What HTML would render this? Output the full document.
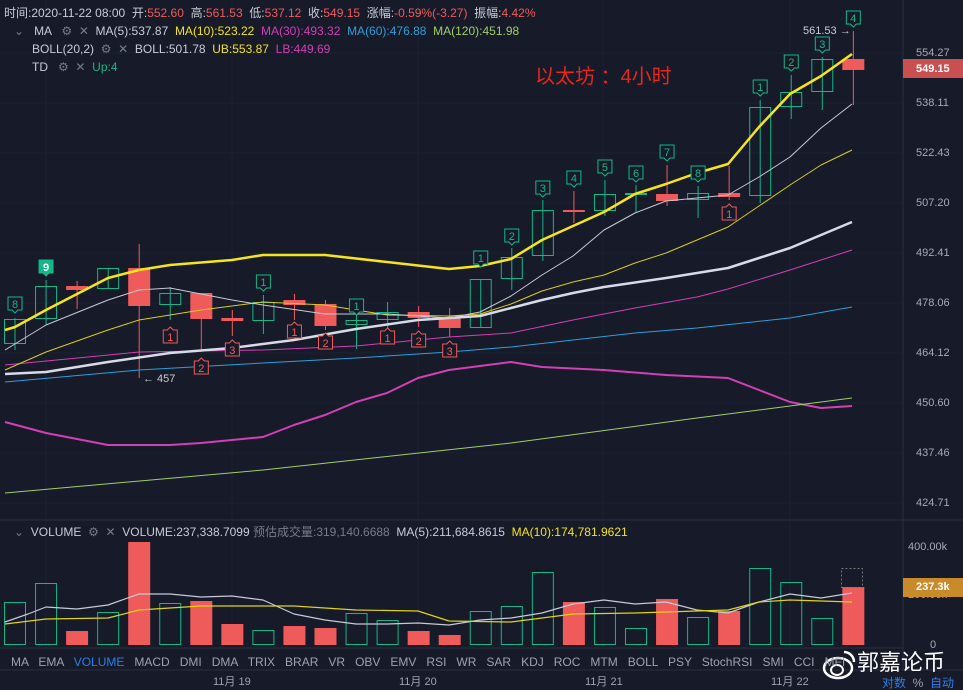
<!DOCTYPE html>
<html><head><meta charset="utf-8">
<style>
html,body{margin:0;padding:0;background:#161a29;width:963px;height:690px;overflow:hidden;font-family:"Liberation Sans","Noto Sans CJK SC",sans-serif;}
svg{position:absolute;left:0;top:0}
.t{position:absolute;font-size:12px;color:#c9ccd6;white-space:nowrap;line-height:14px}
.r{color:#ef5b5b}.y{color:#f2e21c}.m{color:#d33fb4}.b{color:#2e9fd8}.g{color:#9fcf6a}.gr{color:#13b886}.dim{color:#777c8c}
.ax{position:absolute;left:916px;font-size:11px;color:#a7abb6}
</style></head><body>
<svg id="s" width="963" height="690" xmlns="http://www.w3.org/2000/svg"></svg>

<div class="t" style="left:4px;top:6px">时间:2020-11-22 08:00 &nbsp;开:<span class="r">552.60</span> &nbsp;高:<span class="r">561.53</span> &nbsp;低:<span class="r">537.12</span> &nbsp;收:<span class="r">549.15</span> &nbsp;涨幅:<span class="r">-0.59%(-3.27)</span> &nbsp;振幅:<span class="r">4.42%</span></div>
<div class="t" style="left:14px;top:24px"><span class="dim">⌄</span>&nbsp;&nbsp; MA &nbsp;&nbsp;<span class="dim">⚙ &nbsp;✕</span> &nbsp;MA(5):537.87 &nbsp;<span class="y">MA(10):523.22</span> &nbsp;<span class="m">MA(30):493.32</span> &nbsp;<span class="b">MA(60):476.88</span> &nbsp;<span class="g">MA(120):451.98</span></div>
<div class="t" style="left:32px;top:42px">BOLL(20,2) &nbsp;<span class="dim">⚙ &nbsp;✕</span> &nbsp;BOLL:501.78 &nbsp;<span class="y">UB:553.87</span> &nbsp;<span class="m">LB:449.69</span></div>
<div class="t" style="left:32px;top:60px">TD &nbsp;&nbsp;<span class="dim">⚙ &nbsp;✕</span> &nbsp;<span class="gr">Up:4</span></div>
<div class="t" style="left:535px;top:65px;font-size:20px;line-height:24px;color:#e8261e">以太坊 ：4小时</div>

<div class="ax" style="top:47px">554.27</div>
<div style="position:absolute;left:903px;top:59px;width:60px;height:19px;background:#c94f50"></div>
<div class="ax" style="top:63px;color:#fff;font-weight:bold">549.15</div>
<div class="ax" style="top:97px">538.11</div>
<div class="ax" style="top:147px">522.43</div>
<div class="ax" style="top:197px">507.20</div>
<div class="ax" style="top:247px">492.41</div>
<div class="ax" style="top:297px">478.06</div>
<div class="ax" style="top:347px">464.12</div>
<div class="ax" style="top:397px">450.60</div>
<div class="ax" style="top:447px">437.46</div>
<div class="ax" style="top:497px">424.71</div>
<div class="t" style="left:803px;top:24px;font-size:11px">561.53 →</div>
<div class="t" style="left:143px;top:372px;font-size:11px">← 457</div>

<div class="t" style="left:14px;top:525px"><span class="dim">⌄</span>&nbsp; VOLUME &nbsp;<span class="dim">⚙ &nbsp;✕</span>&nbsp; VOLUME:237,338.7099 <span class="dim">预估成交量:319,140.6688</span> &nbsp;MA(5):211,684.8615 &nbsp;<span class="y">MA(10):174,781.9621</span></div>
<div class="ax" style="top:541px;left:908px">400.00k</div>
<div class="ax" style="top:589px;left:908px">200.00k</div>
<div style="position:absolute;left:903px;top:578px;width:60px;height:19px;background:#c98a2a"></div>
<div class="ax" style="top:581px;color:#fff;font-weight:bold">237.3k</div>
<div class="ax" style="top:639px;left:930px">0</div>

<div class="t" style="left:11px;top:655px;color:#9ea3b0;word-spacing:0">MA &nbsp;&nbsp;EMA &nbsp;&nbsp;<span class="b" style="color:#2d7ee8">VOLUME</span> &nbsp;&nbsp;MACD &nbsp;&nbsp;DMI &nbsp;&nbsp;DMA &nbsp;&nbsp;TRIX &nbsp;&nbsp;BRAR &nbsp;&nbsp;VR &nbsp;&nbsp;OBV &nbsp;&nbsp;EMV &nbsp;&nbsp;RSI &nbsp;&nbsp;WR &nbsp;&nbsp;SAR &nbsp;&nbsp;KDJ &nbsp;&nbsp;ROC &nbsp;&nbsp;MTM &nbsp;&nbsp;BOLL &nbsp;&nbsp;PSY &nbsp;&nbsp;StochRSI &nbsp;&nbsp;SMI &nbsp;&nbsp;CCI &nbsp;&nbsp;MFI</div>
<div class="t" style="left:213px;top:675px;font-size:11px;color:#9ea3b0">11月 19</div>
<div class="t" style="left:399px;top:675px;font-size:11px;color:#9ea3b0">11月 20</div>
<div class="t" style="left:585px;top:675px;font-size:11px;color:#9ea3b0">11月 21</div>
<div class="t" style="left:771px;top:675px;font-size:11px;color:#9ea3b0">11月 22</div>
<div class="t" style="left:882px;top:676px;font-size:12px;color:#2d7ee8">对数 &nbsp;<span style="color:#9ea3b0">%</span> &nbsp;自动</div>
<div class="t" style="left:857px;top:650px;font-size:22px;line-height:26px;color:#fff">郭嘉论币</div>

<script>
var s=document.getElementById('s'),h='';
function L(p,c,w){h+='<polyline fill="none" stroke="'+c+'" stroke-width="'+w+'" stroke-linejoin="round" points="'+p+'"/>';}
[53,103,153,203,253,303,353,403,453,503].forEach(function(y){h+='<line x1="0" x2="903" y1="'+y+'" y2="'+y+'" stroke="#1c2132"/>';});
[46,232,418,603,790].forEach(function(x){h+='<line x1="'+x+'" x2="'+x+'" y1="0" y2="648" stroke="#1c2132"/>';});
h+='<line x1="903" x2="903" y1="0" y2="670" stroke="#2a3042"/>';
h+='<line x1="0" x2="963" y1="520" y2="520" stroke="#2a3042"/>';
h+='<line x1="0" x2="903" y1="648" y2="648" stroke="#2a3042"/>';
h+='<line x1="0" x2="963" y1="670" y2="670" stroke="#2a3042"/>';
var G='#13b886',R='#ef5b5b';
var C=[[1,319,344,318,350],[1,286,319,280,325],[0,286,290,281,309],[1,268,289,268,289],[0,268,306,244,378],[1,293,305,287,320],[0,293,319,293,352],[0,318,321,310,336],[1,302,321,295,334],[0,300,305,294,320],[0,304,326,300,330],[1,320,325,312,349],[1,312,320,302,330],[0,312,318,306,327],[0,317,328,308,337],[1,279,328,279,328],[1,257,279,248,290],[1,210,256,200,261],[0,210,212,191,223],[1,194,211,180,216],[1,193,195,185,213],[0,194,201,165,206],[1,193,200,186,218],[0,193,197,166,200],[1,107,196,100,203],[1,92,107,75,119],[1,59,92,57,110],[0,59,70,31,105]];
var V=[602,583,631,612,542,603,601,624,630,626,628,613,620,631,635,611,606,572,602,607,628,599,617,611,568,582,618,587];
C.forEach(function(c,i){var x=15+i*31.05,col=c[0]?G:R;
 h+='<line x1="'+x+'" x2="'+x+'" y1="'+c[3]+'" y2="'+c[4]+'" stroke="'+col+'"/>';
 var bh=Math.max(2,c[2]-c[1]);
 if(c[0])h+='<rect x="'+(x-10.5)+'" y="'+(c[1]+0.5)+'" width="21" height="'+(bh-1)+'" fill="none" stroke="'+col+'"/>';
 else h+='<rect x="'+(x-11)+'" y="'+c[1]+'" width="22" height="'+bh+'" fill="'+col+'"/>';
 var vc=(i==2||i==4||i==6||i==7||i==9||i==10||i==13||i==14||i==18||i==21||i==23||i==27)?R:G;
 if(vc==R)h+='<rect x="'+(x-11)+'" y="'+V[i]+'" width="22" height="'+(645-V[i])+'" fill="'+R+'"/>';
 else h+='<rect x="'+(x-10.5)+'" y="'+(V[i]+0.5)+'" width="21" height="'+(644-V[i])+'" fill="none" stroke="'+G+'"/>';
});
h+='<rect x="841.5" y="568.5" width="21" height="19" fill="none" stroke="#777" stroke-dasharray="2,2"/>';
L("5,422 46,433 108,445 170,445 201,443 263,437 294,425 325,415 356,402 387,393 418,378 449,370 511,362 542,367 604,370 666,375 728,378 759,390 790,402 821,408 852,406",'#d33fb4',2);
L("5,493 263,470 511,443 697,418 852,398",'#9fcf6a',1);
L("5,382 139,370 263,363 356,358 449,352 511,347 573,340 635,333 697,328 790,318 852,307",'#2e9fd8',1);
L("5,365 139,352 263,350 356,346 449,337 511,333 573,320 635,308 697,297 728,289 790,270 852,250",'#d33fb4',1);
L("5,374 46,372 108,362 170,353 232,348 294,340 356,329 418,320 480,316 511,308 542,300 573,293 604,287 666,278 728,268 759,258 790,248 821,235 852,222",'#d8dae8',2.5);
L("5,370 46,352 108,330 139,320 201,310 263,302 325,305 387,315 449,316 480,314 511,304 542,291 573,282 604,275 635,263 666,253 697,240 728,227 759,206 790,185 821,165 852,150",'#d9cc1a',1);
L("5,350 46,325 108,300 139,290 170,288 232,300 263,305 325,314 387,314 449,318 480,312 511,296 542,275 573,256 604,230 635,213 666,201 697,198 728,195 759,177 790,157 821,128 852,104",'#c7c9d4',1);
L("5,330 15,327 46,310 108,278 139,270 170,265 232,260 263,255 325,255 387,262 449,269 480,266 511,259 542,240 573,226 604,212 635,194 666,184 697,173 728,164 759,127 790,94 821,76 852,54",'#f5e51c',2.5);
L("5,622 28,614 46,607 77,609 108,605 139,594 170,594 201,597 232,596 263,600 294,614 325,620 356,624 387,624 418,623 449,625 480,620 511,618 542,613 573,604 604,600 635,604 666,602 697,610 728,613 759,602 790,594 821,598 852,593",'#c7c9d4',1.2);
L("5,624 46,619 108,618 139,610 201,606 263,606 294,606 356,610 418,611 449,621 511,622 542,618 573,614 635,613 666,612 728,610 759,602 790,600 852,602",'#e0d21a',1.2);
function TG(i,y,n,fill){var x=15+i*31.05;h+='<path d="M'+(x-7)+','+y+'h14v13h-4l-3,3l-3,-3h-4z" fill="'+(fill?G:'#161a29')+'" stroke="'+G+'"/><text x="'+x+'" y="'+(y+11)+'" fill="'+(fill?'#fff':G)+'" font-size="11" text-anchor="middle" font-family="Liberation Sans" '+(fill?'font-weight="bold"':'')+'>'+n+'</text>';}
function TR(i,y,n){var x=15+i*31.05;h+='<path d="M'+(x-7)+','+(y+3)+'h4l3,-3l3,3h4v13h-14z" fill="#161a29" stroke="'+R+'"/><text x="'+x+'" y="'+(y+14)+'" fill="'+R+'" font-size="11" text-anchor="middle" font-family="Liberation Sans">'+n+'</text>';}
TG(0,297,8);TG(1,260,9,1);TG(8,275,1);TG(11,299,1);TG(15,251,1);TG(16,229,2);TG(17,181,3);TG(18,171,4);TG(19,160,5);TG(20,166,6);TG(21,145,7);TG(22,166,8);TG(24,80,1);TG(25,55,2);TG(26,37,3);TG(27,11,4);
TR(5,327,1);TR(6,358,2);TR(7,340,3);TR(9,322,1);TR(10,333,2);TR(12,328,1);TR(13,331,2);TR(14,341,3);TR(23,204,1);
h+='<line x1="907" x2="912" y1="68" y2="68" stroke="#fff"/><line x1="907" x2="912" y1="587" y2="587" stroke="#fff"/>';
h+='<ellipse cx="838" cy="668" rx="14" ry="10" fill="none" stroke="#fff" stroke-width="2.5"/><ellipse cx="837" cy="670" rx="6" ry="5" fill="none" stroke="#fff" stroke-width="2"/><path d="M844,652 a10,10 0 0 1 10,10" fill="none" stroke="#fff" stroke-width="2.5"/>';
s.innerHTML=h;
</script>
</body></html>
